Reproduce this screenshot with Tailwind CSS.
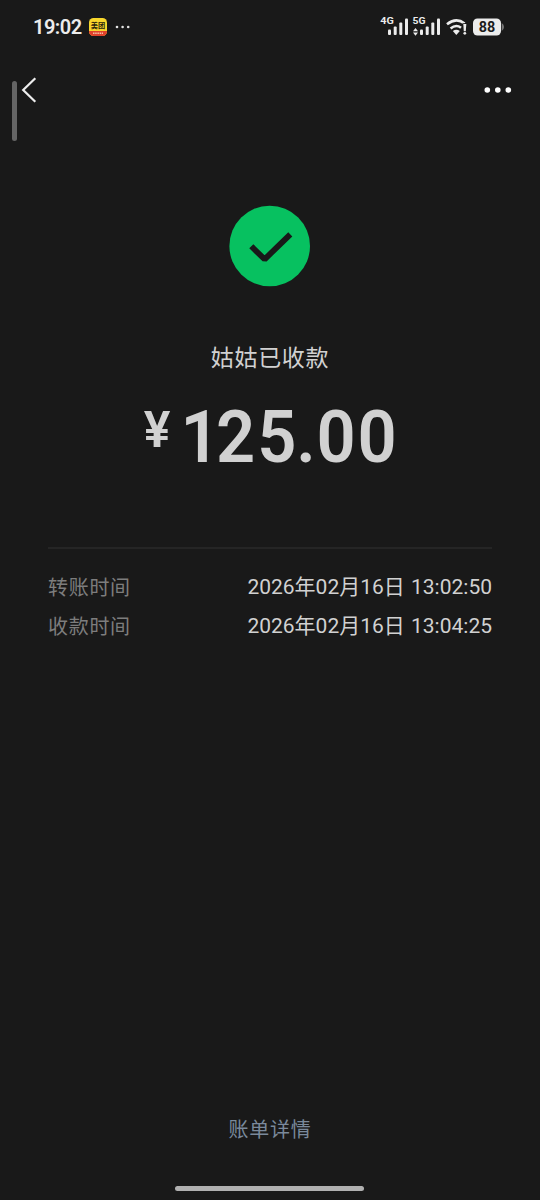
<!DOCTYPE html>
<html lang="zh-CN">
<head>
<meta charset="utf-8">
<title>转账详情</title>
<script src="https://cdn.jsdelivr.net/npm/@tailwindcss/browser@4"></script>
</head>
<body class="bg-[#191919]">
<main class="relative flex h-[1200px] w-[540px] flex-col overflow-hidden bg-[#191919] font-['Roboto','Noto_Sans_CJK_SC',sans-serif] text-[#d1d1d1]">
  <header class="flex h-[54px] items-center justify-between pl-[33px] pr-[36px] text-[#ececec]">
    <div class="flex items-center">
      <span class="w-[56px] text-[20px] leading-[54px] font-semibold tracking-[-0.5px]">19:02</span>
      <svg class="block" width="18" height="18" viewBox="0 0 18 18">
        <defs><clipPath id="app"><rect width="18" height="18" rx="4.5"/></clipPath></defs>
        <g clip-path="url(#app)">
          <rect width="18" height="18" fill="#f8d72c"/>
          <rect y="13" width="18" height="5" fill="#e0412c"/>
        </g>
        <text x="9" y="10.3" text-anchor="middle" font-family="Noto Sans CJK SC" font-weight="700" font-size="7.2" fill="#29240c">美团</text>
        <path d="M4 15.3h10" stroke="#f5c3a5" stroke-width="1.5" stroke-dasharray="1.5 .7"/>
      </svg>
      <svg class="ml-[8px] block" width="16" height="4" viewBox="0 0 16 4" fill="#e4e4e4"><circle cx="2" cy="2" r="1.3"/><circle cx="7.6" cy="2" r="1.3"/><circle cx="13.2" cy="2" r="1.3"/></svg>
    </div>
    <svg class="block" width="124" height="24" viewBox="380 14.500 124 24" fill="#ececec">
      <g font-family="Roboto" font-weight="700" font-size="9.8"><text x="380.3" y="23.8" textLength="13.5" lengthAdjust="spacingAndGlyphs">4G</text><text x="412.5" y="23.8" textLength="13" lengthAdjust="spacingAndGlyphs">5G</text></g>
      <g><rect x="388" y="29" width="3" height="5.5" rx="1"/><rect x="393.7" y="26" width="3" height="8.5" rx="1"/><rect x="399.3" y="22" width="3" height="12.5" rx="1"/><rect x="405" y="18" width="3" height="16.5" rx="1"/></g>
      <g><rect x="420" y="29" width="3" height="5.5" rx="1"/><rect x="425.7" y="26" width="3" height="8.5" rx="1"/><rect x="431.3" y="22" width="3" height="12.5" rx="1"/><rect x="437" y="18" width="3" height="16.5" rx="1"/></g>
      <path d="M413 30.700l2.500-3.300 2.500 3.300zM413 31.900l2.500 3.300 2.500-3.300z"/>
      <g fill="none" stroke="#ececec" stroke-width="2.600"><path d="M447 23.800Q456.200 16.500 464.600 23"/><path d="M450.600 28Q456 23.400 461 27.300"/></g>
      <path d="M452.800 30.600Q456.300 27.800 459.800 30.600L456.300 34.500z"/>
      <path d="M463.300 23.500h3l-.5 7.200h-2z" stroke="#191919" stroke-width="1.600" paint-order="stroke"/><circle cx="464.800" cy="32.800" r="1.400"/>
      <rect x="473" y="18" width="28" height="17" rx="4.5"/>
      <path d="M501.700 22.500q2.300 1.300 2.300 4t-2.300 4z" fill="#777"/>
      <text x="487" y="31.5" text-anchor="middle" font-family="Roboto" font-weight="700" font-size="14" textLength="16.5" lengthAdjust="spacingAndGlyphs" fill="#1b1b1b">88</text>
    </svg>
  </header>
  <nav class="flex h-[72px] items-center justify-between pl-[21px] pr-[28px]">
    <svg class="block" width="16" height="28" viewBox="0 0 16 28" fill="none" stroke="#ededed" stroke-width="2.200"><path d="M14.300 2.300L2.200 14l12.100 11.700"/></svg>
    <svg class="block" width="28" height="8" viewBox="0 0 28 8" fill="#fff"><circle cx="3.300" cy="4" r="2.800"/><circle cx="13.800" cy="4" r="2.800"/><circle cx="24.300" cy="4" r="2.800"/></svg>
  </nav>
  <div class="absolute left-[12px] top-[81px] h-[60px] w-[5px] rounded-full bg-[#656565]"></div>
  <section class="flex flex-col items-center pt-[79px]">
    <svg class="block" width="82" height="82" viewBox="0 0 82 82"><circle cx="40.700" cy="41" r="40.300" fill="#07c160"/><path d="M22.300 41.300L35.600 54.300 61.300 29.300" fill="none" stroke="#191919" stroke-width="5.800" stroke-linejoin="bevel"/></svg>
    <h1 class="mt-[54px] h-[36px] text-[23px] leading-[36px] font-normal tracking-[0.7px]">姑姑已收款</h1>
    <svg class="mt-[14px] block overflow-visible" width="540" height="94" viewBox="0 0 540 94" fill="#d1d1d1" font-family="Roboto" font-weight="600" text-anchor="middle">
      <text x="157" y="56" font-size="50">¥</text>
      <g transform="scale(.94 1)"><text y="71.300" font-size="73" x="213 250.600 294.500 325.500 357.600 401.200">125.00</text></g>
    </svg>
  </section>
  <dl class="mx-[48px] mt-[62px] flex flex-col border-t-2 border-[#252525] pt-[19px] text-[20px] leading-[39px]">
    <div class="flex h-[39px] justify-between"><dt class="pt-px tracking-[0.7px] text-[#7d7d7d]">转账时间</dt><dd class="text-[21px] [word-spacing:1px]">2026年02月16日 13:02:50</dd></div>
    <div class="flex h-[39px] justify-between"><dt class="pt-px tracking-[0.7px] text-[#7d7d7d]">收款时间</dt><dd class="text-[21px] [word-spacing:1px]">2026年02月16日 13:04:25</dd></div>
  </dl>
  <footer class="mt-auto flex flex-col items-center pb-[9px]">
    <a class="text-[20px] leading-[32px] tracking-[0.7px] text-[#7a899b]">账单详情</a>
    <div class="mr-px mt-[40px] h-[5px] w-[189px] rounded-full bg-[#b0b0b0]"></div>
  </footer>
</main>
</body>
</html>
